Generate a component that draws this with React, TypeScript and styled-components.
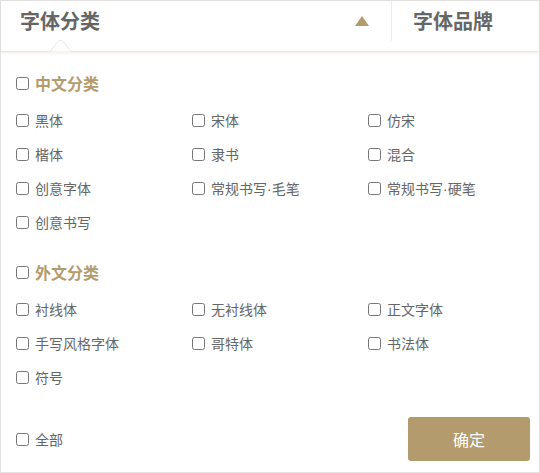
import React from "react";
import styled, { createGlobalStyle } from "styled-components";

const GlobalStyle = createGlobalStyle`
  * {
    box-sizing: border-box;
  }
  body {
    margin: 0;
    background: #fff;
    font-family: "Noto Sans CJK SC", "Noto Sans", sans-serif;
  }
`;

const GOLD = "#b39b6e";

const Panel = styled.div`
  width: 540px;
  height: 473px;
  border: 1px solid #e3e3e3;
  background: #fff;
  display: flex;
  flex-direction: column;
`;

const Header = styled.div`
  position: relative;
  height: 51px;
  flex-shrink: 0;
  display: flex;
  align-items: flex-start;
  border-bottom: 1px solid #ece5d9;
  box-shadow: 0 1px 3px rgba(179, 155, 110, 0.18);
`;

const Tab = styled.div<{ $grow?: boolean }>`
  height: 40px;
  display: flex;
  align-items: center;
  justify-content: space-between;
  padding: 0 22px 0 ${(p) => (p.$grow ? 19 : 21)}px;
  width: ${(p) => (p.$grow ? "391px" : "auto")};
  border-right: ${(p) => (p.$grow ? "1px solid #ececec" : "none")};
  font-size: 20px;
  font-weight: 700;
  color: #666;
  line-height: 20px;
`;

const Arrow = styled.span`
  width: 0;
  height: 0;
  border-left: 7px solid transparent;
  border-right: 7px solid transparent;
  border-bottom: 10px solid ${GOLD};
`;

const Notch = styled.svg`
  position: absolute;
  left: 49px;
  bottom: -1px;
  width: 21px;
  height: 13px;
`;

const Body = styled.div`
  flex: 1;
  display: flex;
  flex-direction: column;
  padding: 21px 9px 11px 15px;
`;

const Section = styled.div<{ $top?: number }>`
  margin-top: ${(p) => p.$top ?? 0}px;
`;

const Label = styled.label`
  display: flex;
  align-items: center;
  gap: 6px;
  height: 20px;
  font-size: 14px;
  line-height: 20px;
  color: #666;
  white-space: nowrap;
  cursor: pointer;
`;

const HeadLabel = styled(Label)`
  font-size: 16px;
  font-weight: 700;
  color: ${GOLD};
  margin-bottom: 17px;
`;

const Dot = styled.span`
  font-family: "Liberation Sans", Arial, sans-serif;
`;

const Box = styled.input.attrs({ type: "checkbox" })`
  width: 13px;
  height: 13px;
  margin: 0;
  flex-shrink: 0;
`;

const Grid = styled.div`
  display: grid;
  grid-template-columns: repeat(3, 176px);
  row-gap: 14px;
`;

const Footer = styled.div`
  margin-top: 30px;
  display: flex;
  align-items: center;
  justify-content: space-between;
`;

const Confirm = styled.button`
  width: 122px;
  height: 44px;
  border: none;
  border-radius: 3px;
  background: ${GOLD};
  color: #fff;
  font-family: inherit;
  font-size: 16px;
  cursor: pointer;
`;

const groups = [
  {
    title: "中文分类",
    items: ["黑体", "宋体", "仿宋", "楷体", "隶书", "混合", "创意字体", "常规书写·毛笔", "常规书写·硬笔", "创意书写"],
  },
  {
    title: "外文分类",
    items: ["衬线体", "无衬线体", "正文字体", "手写风格字体", "哥特体", "书法体", "符号"],
  },
];

// the CJK font draws "·" full width, so the dot takes a Latin face
const renderName = (name: string) => {
  const parts = name.split("·");
  return parts.map((part, i) => (
    <React.Fragment key={i}>
      {i > 0 && <Dot>·</Dot>}
      {part}
    </React.Fragment>
  ));
};

export default function App() {
  return (
    <>
      <GlobalStyle />
      <Panel>
        <Header>
          <Tab $grow>
            <span>字体分类</span>
            <Arrow />
          </Tab>
          <Tab>字体品牌</Tab>
          <Notch viewBox="0 0 21 13">
            <path d="M0 12.5 L7.5 3 Q10.5 -0.5 13.5 3 L21 12.5 Z" fill="#fff" />
            <path d="M0 12.5 L7.5 3 Q10.5 -0.5 13.5 3 L21 12.5" fill="none" stroke="#ece5d9" strokeWidth="1" />
          </Notch>
        </Header>
        <Body>
          {groups.map((g, i) => (
            <Section key={g.title} $top={i === 0 ? 0 : 30}>
              <HeadLabel>
                <Box />
                {g.title}
              </HeadLabel>
              <Grid>
                {g.items.map((item) => (
                  <Label key={item}>
                    <Box />
                    <span>{renderName(item)}</span>
                  </Label>
                ))}
              </Grid>
            </Section>
          ))}
          <Footer>
            <Label>
              <Box />
              全部
            </Label>
            <Confirm>确定</Confirm>
          </Footer>
        </Body>
      </Panel>
    </>
  );
}
